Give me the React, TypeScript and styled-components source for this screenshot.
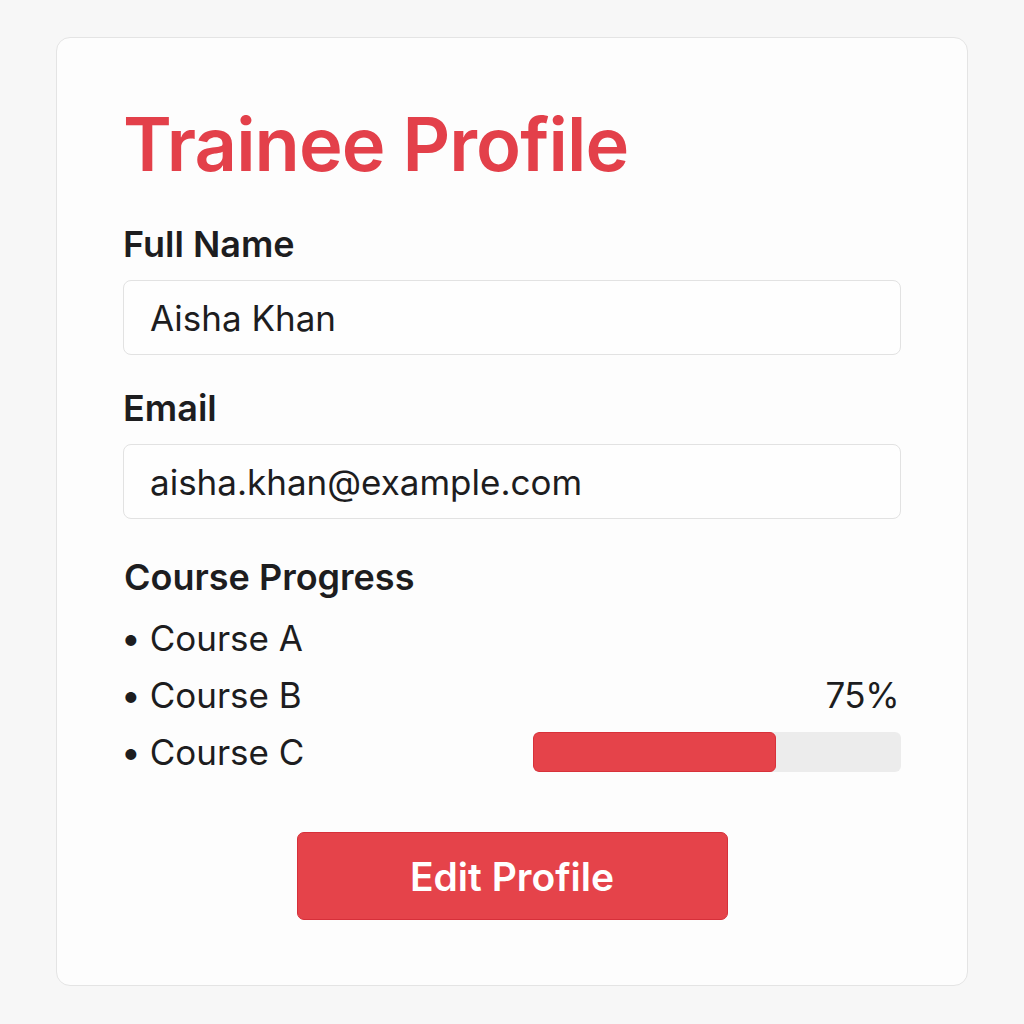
import React from 'react';
import styled, { createGlobalStyle } from 'styled-components';

const GlobalStyle = createGlobalStyle`
  body {
    margin: 0;
    background: #f7f7f7;
    font-family: Inter, "Noto Sans", sans-serif;
    color: #1d1d1f;
  }
`;

const Page = styled.div`
  width: 1024px;
  height: 1024px;
  padding: 37px 56px 0;
  box-sizing: border-box;
`;

const Card = styled.div`
  height: 949px;
  box-sizing: border-box;
  background: #fdfdfd;
  border: 1px solid #e4e4e4;
  border-radius: 14px;
  padding: 69px 66px 0 66px;
  display: flex;
  flex-direction: column;
`;

const Title = styled.h1`
  margin: 0 0 45px;
  font-size: 74px;
  line-height: 74px;
  font-weight: 600;
  letter-spacing: -0.9px;
  color: #e3404a;
`;

const Label = styled.label`
  display: block;
  font-size: 36px;
  line-height: 36px;
  font-weight: 600;
  margin-bottom: 18px;
`;

const Field = styled.div`
  height: 75px;
  box-sizing: border-box;
  border: 1px solid #e2e2e2;
  border-radius: 8px;
  background: #fefefe;
  padding: 0 26px;
  display: flex;
  align-items: center;
  font-size: 35px;
  font-weight: 400;
  margin-bottom: 35px;
`;

const SectionTitle = styled.h2`
  margin: 5px 0 14px 1px;
  font-size: 36px;
  line-height: 36px;
  font-weight: 600;
`;

const CourseList = styled.ul`
  list-style: none;
  margin: 0;
  padding: 0;
  display: flex;
  flex-direction: column;
`;

const CourseRow = styled.li`
  height: 57px;
  display: flex;
  align-items: center;
  justify-content: space-between;
  font-size: 35px;
`;

const CourseName = styled.span`
  margin-left: -2px;
  &::before {
    content: '•';
    margin-right: 9px;
  }
`;

const Percent = styled.span`
  margin-right: 2px;
  letter-spacing: -0.5px;
`;

const Track = styled.div`
  width: 368px;
  height: 40px;
  border-radius: 6px;
  background: #ececec;
  overflow: hidden;
`;

const Fill = styled.div`
  height: 100%;
  background: #e5434a;
  border: 1px solid #d8313a;
  box-sizing: border-box;
  border-radius: 6px;
`;

const ButtonWrap = styled.div`
  display: flex;
  justify-content: center;
  margin-top: 52px;
`;

const EditButton = styled.button`
  width: 431px;
  height: 88px;
  border: 1px solid #d6303a;
  border-radius: 7px;
  background: #e5434a;
  color: #ffffff;
  font-family: Inter, "Noto Sans", sans-serif;
  font-size: 39px;
  font-weight: 600;
  cursor: pointer;
`;

const courses = [
  { name: 'Course A' },
  { name: 'Course B', percent: 75 },
  { name: 'Course C', bar: 66 },
];

export default function App() {
  return (
    <>
      <GlobalStyle />
      <Page>
        <Card>
          <Title>Trainee Profile</Title>
          <Label>Full Name</Label>
          <Field>Aisha Khan</Field>
          <Label>Email</Label>
          <Field>aisha.khan@example.com</Field>
          <SectionTitle>Course Progress</SectionTitle>
          <CourseList>
            {courses.map((c) => (
              <CourseRow key={c.name}>
                <CourseName>{c.name}</CourseName>
                {c.percent !== undefined && <Percent>{c.percent}%</Percent>}
                {c.bar !== undefined && (
                  <Track>
                    <Fill style={{ width: `${c.bar}%` }} />
                  </Track>
                )}
              </CourseRow>
            ))}
          </CourseList>
          <ButtonWrap>
            <EditButton>Edit Profile</EditButton>
          </ButtonWrap>
        </Card>
      </Page>
    </>
  );
}
